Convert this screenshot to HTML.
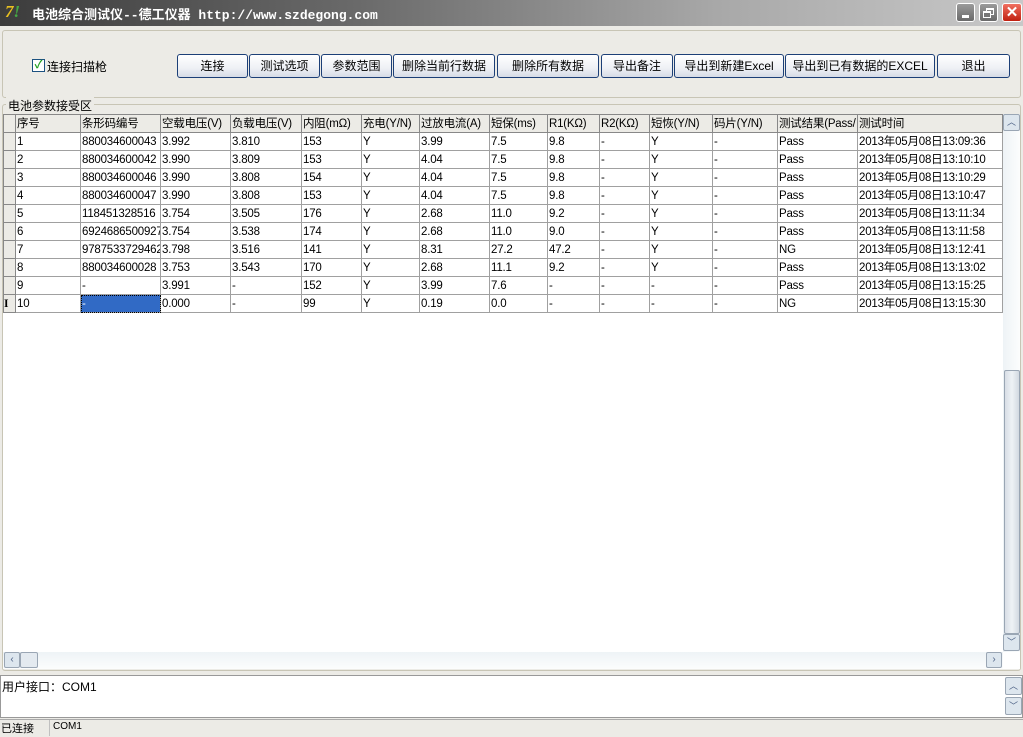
<!DOCTYPE html>
<html><head><meta charset="utf-8"><style>
*{margin:0;padding:0;box-sizing:border-box}
body{width:1023px;height:737px;overflow:hidden;background:#ecebe6;font-family:"Liberation Sans","Noto Sans CJK SC",sans-serif;font-size:12px;color:#000;position:relative}
.abs{position:absolute}
#title{left:0;top:0;width:1023px;height:26px;background:linear-gradient(90deg,#3c3c3c 0%,#6a6a6a 35%,#a8a8a8 70%,#c8c8c8 100%)}
#title .t{left:32px;top:4px;color:#fff;font-weight:bold;font-size:13px;font-family:"Liberation Mono","Noto Sans CJK SC",monospace;white-space:nowrap}
.wb{top:3px;width:19px;height:19px;border:1px solid #fff;border-radius:3px;background:linear-gradient(#9a9a9a,#6a6a6a)}
.btn{top:54px;height:24px;border:1px solid #1c3f77;border-radius:3px;background:linear-gradient(#fff,#eef0f5 60%,#d6dbe6);text-align:center;line-height:22px;font-size:12px;white-space:nowrap}
table{border-collapse:collapse;table-layout:fixed;width:999px;position:absolute;left:3px;top:114px;background:#fff}
td{height:18px;border:1px solid #a0a0a0;padding:0 1px;white-space:nowrap;overflow:hidden;font-size:11.5px;line-height:16px;letter-spacing:-0.2px}
tr.h td{background:#ecebe6;border-color:#888}
td.ind{background:#ecebe6;border-color:#888}
</style></head><body>
<div id="title" class="abs">
<div class="abs" style="left:5px;top:2px;color:#e8c020;font-weight:bold;font-style:italic;font-size:17px;font-family:'Liberation Serif',serif">7<span style="color:#4a4">!</span></div>
<div class="abs t">电池综合测试仪--德工仪器 http://www.szdegong.com</div>
<div class="abs wb" style="left:956px"><div class="abs" style="left:5px;top:11px;width:7px;height:3px;background:#fff"></div></div>
<div class="abs wb" style="left:979px"><div class="abs" style="left:6px;top:4px;width:8px;height:7px;border:1px solid #fff;border-top-width:2px"></div><div class="abs" style="left:3px;top:7px;width:8px;height:7px;border:1px solid #fff;border-top-width:2px;background:#777"></div></div>
<div class="abs wb" style="left:1002px;width:20px;background:linear-gradient(#f07060,#c02010);color:#fff;font-weight:bold;text-align:center;line-height:17px;font-size:15px">✕</div>
</div>
<div class="abs" style="left:2px;top:30px;width:1019px;height:68px;border:1px solid #c8c5b5;border-radius:3px"></div>
<div class="abs" style="left:32px;top:59px;width:13px;height:13px;border:1px solid #1c5180;background:#fff;color:#21a121;font-size:11px;line-height:11px;text-align:center;font-weight:bold">✓</div>
<div class="abs" style="left:47px;top:58px">连接扫描枪</div>
<div class="abs btn" style="left:177px;width:71px">连接</div>
<div class="abs btn" style="left:249px;width:71px">测试选项</div>
<div class="abs btn" style="left:321px;width:71px">参数范围</div>
<div class="abs btn" style="left:393px;width:102px">删除当前行数据</div>
<div class="abs btn" style="left:497px;width:102px">删除所有数据</div>
<div class="abs btn" style="left:601px;width:72px">导出备注</div>
<div class="abs btn" style="left:674px;width:110px">导出到新建Excel</div>
<div class="abs btn" style="left:785px;width:150px">导出到已有数据的EXCEL</div>
<div class="abs btn" style="left:937px;width:73px">退出</div>
<div class="abs" style="left:2px;top:104px;width:1019px;height:567px;border:1px solid #c8c5b5;border-radius:3px"></div>
<div class="abs" style="left:6px;top:97px;background:#ecebe6;padding:0 2px">电池参数接受区</div>
<div class="abs" style="left:3px;top:114px;width:1017px;height:555px;background:#fff"></div>
<table>
<colgroup><col style="width:12px"><col style="width:65px"><col style="width:80px"><col style="width:70px"><col style="width:71px"><col style="width:60px"><col style="width:58px"><col style="width:70px"><col style="width:58px"><col style="width:52px"><col style="width:50px"><col style="width:63px"><col style="width:65px"><col style="width:80px"><col style="width:145px"></colgroup>
<tr class="h"><td></td><td>序号</td><td>条形码编号</td><td>空载电压(V)</td><td>负载电压(V)</td><td>内阻(mΩ)</td><td>充电(Y/N)</td><td>过放电流(A)</td><td>短保(ms)</td><td>R1(KΩ)</td><td>R2(KΩ)</td><td>短恢(Y/N)</td><td>码片(Y/N)</td><td>测试结果(Pass/</td><td>测试时间</td></tr>
<tr><td class="ind"></td><td>1</td><td>880034600043</td><td>3.992</td><td>3.810</td><td>153</td><td>Y</td><td>3.99</td><td>7.5</td><td>9.8</td><td>-</td><td>Y</td><td>-</td><td>Pass</td><td>2013年05月08日13:09:36</td></tr>
<tr><td class="ind"></td><td>2</td><td>880034600042</td><td>3.990</td><td>3.809</td><td>153</td><td>Y</td><td>4.04</td><td>7.5</td><td>9.8</td><td>-</td><td>Y</td><td>-</td><td>Pass</td><td>2013年05月08日13:10:10</td></tr>
<tr><td class="ind"></td><td>3</td><td>880034600046</td><td>3.990</td><td>3.808</td><td>154</td><td>Y</td><td>4.04</td><td>7.5</td><td>9.8</td><td>-</td><td>Y</td><td>-</td><td>Pass</td><td>2013年05月08日13:10:29</td></tr>
<tr><td class="ind"></td><td>4</td><td>880034600047</td><td>3.990</td><td>3.808</td><td>153</td><td>Y</td><td>4.04</td><td>7.5</td><td>9.8</td><td>-</td><td>Y</td><td>-</td><td>Pass</td><td>2013年05月08日13:10:47</td></tr>
<tr><td class="ind"></td><td>5</td><td>118451328516</td><td>3.754</td><td>3.505</td><td>176</td><td>Y</td><td>2.68</td><td>11.0</td><td>9.2</td><td>-</td><td>Y</td><td>-</td><td>Pass</td><td>2013年05月08日13:11:34</td></tr>
<tr><td class="ind"></td><td>6</td><td>6924686500927</td><td>3.754</td><td>3.538</td><td>174</td><td>Y</td><td>2.68</td><td>11.0</td><td>9.0</td><td>-</td><td>Y</td><td>-</td><td>Pass</td><td>2013年05月08日13:11:58</td></tr>
<tr><td class="ind"></td><td>7</td><td>9787533729462</td><td>3.798</td><td>3.516</td><td>141</td><td>Y</td><td>8.31</td><td>27.2</td><td>47.2</td><td>-</td><td>Y</td><td>-</td><td>NG</td><td>2013年05月08日13:12:41</td></tr>
<tr><td class="ind"></td><td>8</td><td>880034600028</td><td>3.753</td><td>3.543</td><td>170</td><td>Y</td><td>2.68</td><td>11.1</td><td>9.2</td><td>-</td><td>Y</td><td>-</td><td>Pass</td><td>2013年05月08日13:13:02</td></tr>
<tr><td class="ind"></td><td>9</td><td>-</td><td>3.991</td><td>-</td><td>152</td><td>Y</td><td>3.99</td><td>7.6</td><td>-</td><td>-</td><td>-</td><td>-</td><td>Pass</td><td>2013年05月08日13:15:25</td></tr>
<tr><td class="ind" style="font-family:'Liberation Serif',serif;font-weight:bold;padding:0">I</td><td>10</td><td style="background:#316ac5;color:#fff;outline:1px dotted #000;outline-offset:-1px">-</td><td>0.000</td><td>-</td><td>99</td><td>Y</td><td>0.19</td><td>0.0</td><td>-</td><td>-</td><td>-</td><td>-</td><td>NG</td><td>2013年05月08日13:15:30</td></tr>
</table>
<div class="abs" style="left:1003px;top:114px;width:17px;height:538px;background:linear-gradient(90deg,#eef3f6,#fcfdfd)"></div>
<div class="abs" style="left:1003px;top:114px;width:17px;height:17px;border:1px solid #9aa6b4;border-radius:2px;background:#dde6ee;text-align:center;font-size:9px;line-height:15px;color:#4d6185">︿</div>
<div class="abs" style="left:1004px;top:370px;width:16px;height:264px;border:1px solid #9aa6b4;border-radius:2px;background:linear-gradient(90deg,#d8dee6,#eef2f5,#d2d9e1)"></div>
<div class="abs" style="left:1003px;top:634px;width:17px;height:17px;border:1px solid #9aa6b4;border-radius:2px;background:#dde6ee;text-align:center;font-size:9px;line-height:15px;color:#4d6185">﹀</div>
<div class="abs" style="left:3px;top:652px;width:1000px;height:17px;background:linear-gradient(#eef3f6,#fcfdfd)"></div>
<div class="abs" style="left:4px;top:652px;width:16px;height:16px;border:1px solid #9aa6b4;border-radius:2px;background:#dde6ee;text-align:center;line-height:14px;color:#4d6185;font-size:10px">‹</div>
<div class="abs" style="left:20px;top:652px;width:18px;height:16px;border:1px solid #9aa6b4;border-radius:2px;background:#e4eaf0"></div>
<div class="abs" style="left:986px;top:652px;width:16px;height:16px;border:1px solid #9aa6b4;border-radius:2px;background:#dde6ee;text-align:center;line-height:14px;color:#4d6185;font-size:10px">›</div>
<div class="abs" style="left:0;top:675px;width:1023px;height:43px;background:#fff;border:1px solid #999"></div>
<div class="abs" style="left:2px;top:678px">用户接口：COM1</div>
<div class="abs" style="left:1005px;top:677px;width:17px;height:18px;border:1px solid #9aa6b4;border-radius:2px;background:#dde6ee;text-align:center;font-size:9px;line-height:16px;color:#4d6185">︿</div>
<div class="abs" style="left:1005px;top:697px;width:17px;height:18px;border:1px solid #9aa6b4;border-radius:2px;background:#dde6ee;text-align:center;font-size:9px;line-height:16px;color:#4d6185">﹀</div>
<div class="abs" style="left:0;top:719px;width:1023px;height:18px;background:#ecebe6;border-top:1px solid #aaa"></div>
<div class="abs" style="left:1px;top:720px;font-size:11px">已连接</div>
<div class="abs" style="left:49px;top:720px;height:16px;border-left:1px solid #c0c0c0"></div>
<div class="abs" style="left:53px;top:721px;font-size:10px">COM1</div>
</body></html>
